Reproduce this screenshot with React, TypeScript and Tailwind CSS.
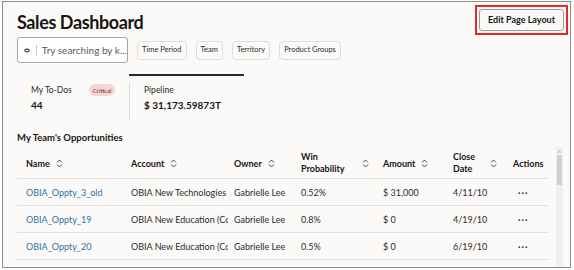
import React from "react";

const SortIcon = () => (
  <svg width="7" height="9" viewBox="0 0 7 9" className="ml-[6px] shrink-0">
    <path d="M1 3.5 L3.5 1 L6 3.5" fill="none" stroke="#444" strokeWidth="1" />
    <path d="M1 5.5 L3.5 8 L6 5.5" fill="none" stroke="#444" strokeWidth="1" />
  </svg>
);

const rows = [
  { name: "OBIA_Oppty_3_old", account: "OBIA New Technologies", owner: "Gabrielle Lee", win: "0.52%", amount: "$ 31,000", date: "4/11/10" },
  { name: "OBIA_Oppty_19", account: "OBIA New Education (Co", owner: "Gabrielle Lee", win: "0.8%", amount: "$ 0", date: "4/19/10" },
  { name: "OBIA_Oppty_20", account: "OBIA New Education (Co", owner: "Gabrielle Lee", win: "0.5%", amount: "$ 0", date: "6/19/10" },
];

export default function App() {
  return (
    <div className="w-[574px] h-[270px] bg-white pt-[1px] pl-[2px]" style={{ fontFamily: "Lato, 'Noto Sans', sans-serif" }}>
      <div className="w-[569px] h-[267px] border border-[#8c8c8c] bg-[#fbfaf9] overflow-hidden flex flex-col">
        {/* header */}
        <div className="flex justify-between items-start">
          <div className="pl-[14px] pt-[8px] text-[18px] leading-[24px] font-bold tracking-[-0.4px] text-[#161513]">Sales Dashboard</div>
          <div className="mt-[3px] mr-[2px] border-2 border-[#e8262b] p-[2px]">
            <div className="h-[22px] px-[8px] flex items-center border border-[#9d9b98] rounded-[3px] bg-[#fbfaf9] text-[9px] font-bold text-[#161513]">
              Edit Page Layout
            </div>
          </div>
        </div>
        {/* search row */}
        <div className="flex items-center pl-[14px] mt-[2px]">
          <div className="w-[111px] h-[26px] border border-[#a8a6a3] rounded-[3px] bg-white flex items-center">
            <svg width="7" height="5" viewBox="0 0 7 5" className="ml-[6px]">
              <ellipse cx="3.5" cy="2.5" rx="2.6" ry="1.6" fill="none" stroke="#333" strokeWidth="1.2" />
            </svg>
            <div className="w-px h-[11px] bg-[#c9c7c4] ml-[6px]" />
            <span className="ml-[5px] text-[10px] text-[#5c5a57] whitespace-nowrap">Try searching by k...</span>
          </div>
          <div className="flex gap-[9px] ml-[9px]">
            {["Time Period", "Team", "Territory", "Product Groups"].map((c) => (
              <div key={c} className="h-[19px] px-[4px] flex items-center border border-[#dedcd9] rounded-[4px] text-[7.5px] text-[#2b2a28] bg-[#fbfaf9]">
                {c}
              </div>
            ))}
          </div>
        </div>
        {/* tabs */}
        <div className="flex pl-[14px] mt-[11px]">
          <div className="w-[112px] pt-[8px] pl-[14px] border-t-2 border-transparent">
            <div className="flex items-center h-[12px]">
              <span className="text-[8.5px] text-[#2b2a28]">My To-Dos</span>
              <span className="ml-[17px] h-[12px] px-[4px] flex items-center rounded-full bg-[#f6d6d2] text-[6px] text-[#6b2a26]">Critical</span>
            </div>
            <div className="text-[10px] font-bold text-[#161513] mt-[2px]">44</div>
          </div>
          <div className="w-[115px] border-t-2 border-[#2b2a28] pt-[7px]">
            <div className="border-l border-[#dcdad7] pl-[14px] h-[37px] pt-[1px]">
              <div className="text-[8.5px] text-[#2b2a28] h-[12px] flex items-center">Pipeline</div>
              <div className="text-[10px] font-bold text-[#161513] mt-[2px]">$ 31,173.59873T</div>
            </div>
          </div>
        </div>
        {/* section title */}
        <div className="pl-[14px] mt-[11px] text-[9.5px] font-bold text-[#161513]">My Team's Opportunities</div>
        {/* table */}
        <div className="flex pl-[14px] mt-[3px] flex-1 min-h-0">
          <div className="w-[532px] text-[9px] text-[#2b2a28]">
            <div className="flex h-[31px] items-center border-b border-[#e4e2df] font-bold text-[#161513]">
              <div className="w-[114px] pl-[9px] flex items-center">Name<SortIcon /></div>
              <div className="w-[103px] flex items-center">Account<SortIcon /></div>
              <div className="w-[67px] flex items-center">Owner<SortIcon /></div>
              <div className="w-[82px] flex items-center">
                <div className="w-[55px] leading-[12px]">Win<br />Probability</div>
                <SortIcon />
              </div>
              <div className="w-[70px] flex items-center">Amount<SortIcon /></div>
              <div className="w-[60px] flex items-center">
                <div className="w-[31px] leading-[12px]">Close<br />Date</div>
                <SortIcon />
              </div>
              <div className="flex-1 overflow-hidden whitespace-nowrap">Actions</div>
            </div>
            {rows.map((r) => (
              <div key={r.name} className="flex h-[27px] items-center border-b border-[#e4e2df] whitespace-nowrap">
                <div className="w-[114px] pl-[9px] text-[#2c73a4]">{r.name}</div>
                <div className="w-[103px] pr-[6px]"><div className="overflow-hidden">{r.account}</div></div>
                <div className="w-[67px] overflow-hidden">{r.owner}</div>
                <div className="w-[82px]">{r.win}</div>
                <div className="w-[70px]">{r.amount}</div>
                <div className="w-[60px]">{r.date}</div>
                <div className="flex-1 pl-[5px] font-bold tracking-[1px] text-[#333]">···</div>
              </div>
            ))}
          </div>
          <div className="ml-[7px] w-[7px] bg-[#f0efed] mt-[-1px] flex flex-col items-center">
            <svg width="5" height="4" viewBox="0 0 5 4" className="mt-[2px]"><path d="M0.5 3.5 L2.5 1 L4.5 3.5Z" fill="#c4c2bf" /></svg>
            <div className="w-[5px] mt-[2px] h-[30px] bg-[#d3d1ce]" />
          </div>
        </div>
      </div>
    </div>
  );
}
